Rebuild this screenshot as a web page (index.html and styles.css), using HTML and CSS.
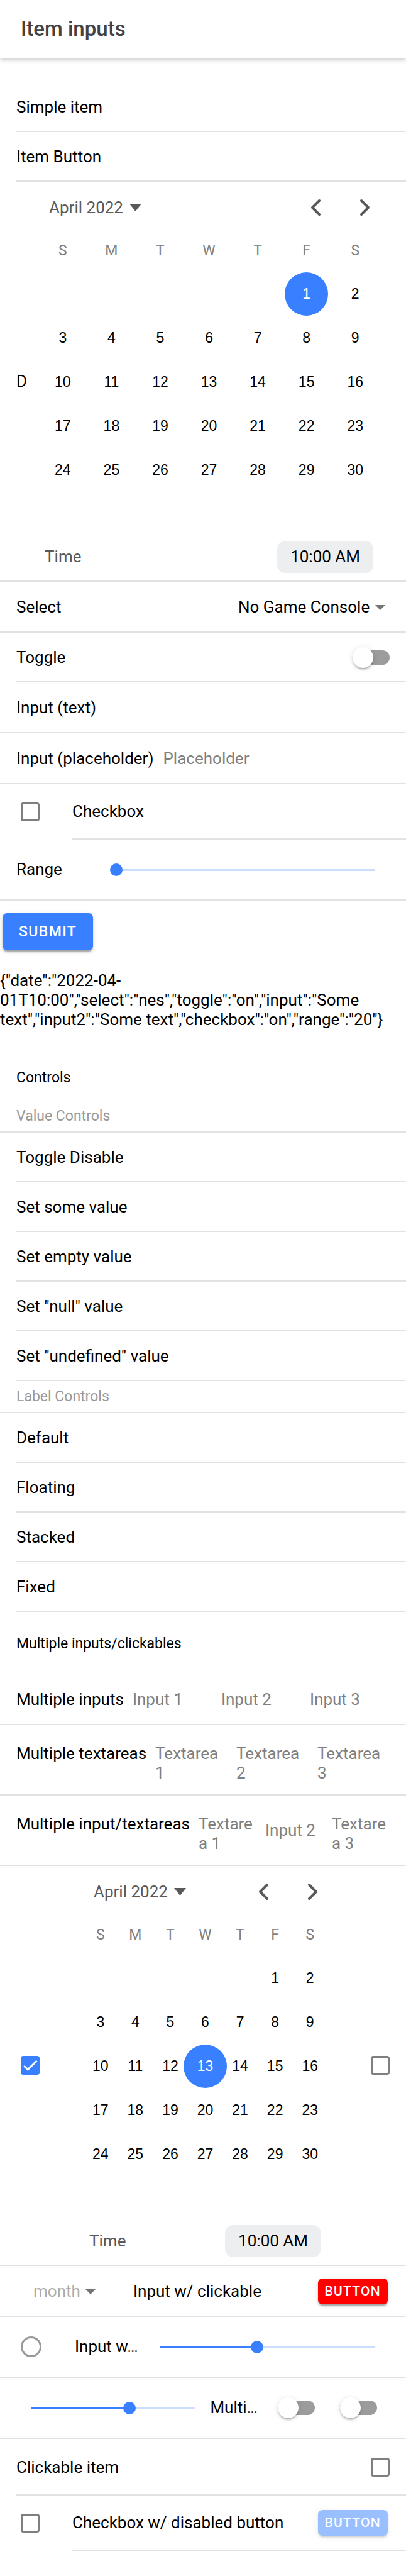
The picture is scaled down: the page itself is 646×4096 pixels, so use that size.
FILE: index.html
```html
<!DOCTYPE html>
<html lang="en">
<head>
<meta charset="utf-8">
<title>Item inputs</title>
<meta name="viewport" content="width=device-width, initial-scale=1">
<link rel="stylesheet" href="styles.css">
</head>
<body>
<header class="toolbar"><h1 class="toolbar-title">Item inputs</h1></header>
<main>
<form class="form" onsubmit="return false">
  <div class="item"><div class="inner">Simple item</div></div>
  <div class="item"><button type="button" class="inner">Item Button</button></div>

  <div class="item full date-item">
    <span class="date-label">D</span>
    <section class="calendar" aria-label="Date">
      <div class="cal-header">
        <button type="button" class="month-btn">April 2022 <svg class="caret" viewBox="0 0 19 12"><path d="M0 0h19L9.500 12z"/></svg></button>
        <button type="button" class="nav-btn" aria-label="Previous month"><svg viewBox="0 0 18 28"><path d="M15 3L4 14l11 11"/></svg></button>
        <button type="button" class="nav-btn" aria-label="Next month"><svg viewBox="0 0 18 28"><path d="M3 3l11 11L3 25"/></svg></button>
      </div>
      <div class="weekdays"><span>S</span><span>M</span><span>T</span><span>W</span><span>T</span><span>F</span><span>S</span></div>
      <div class="days">
        <button type="button" class="day first active">1</button><button type="button" class="day">2</button>
        <button type="button" class="day">3</button><button type="button" class="day">4</button><button type="button" class="day">5</button><button type="button" class="day">6</button><button type="button" class="day">7</button><button type="button" class="day">8</button><button type="button" class="day">9</button>
        <button type="button" class="day">10</button><button type="button" class="day">11</button><button type="button" class="day">12</button><button type="button" class="day">13</button><button type="button" class="day">14</button><button type="button" class="day">15</button><button type="button" class="day">16</button>
        <button type="button" class="day">17</button><button type="button" class="day">18</button><button type="button" class="day">19</button><button type="button" class="day">20</button><button type="button" class="day">21</button><button type="button" class="day">22</button><button type="button" class="day">23</button>
        <button type="button" class="day">24</button><button type="button" class="day">25</button><button type="button" class="day">26</button><button type="button" class="day">27</button><button type="button" class="day">28</button><button type="button" class="day">29</button><button type="button" class="day">30</button>
      </div>
      <div class="time-row"><span>Time</span><button type="button" class="time-btn">10:00 AM</button></div>
    </section>
  </div>

  <div class="item full tall">
    <label class="grow" for="console">Select</label>
    <span class="select-wrap"><select id="console" class="select"><option>No Game Console</option></select><svg class="arrow" viewBox="0 0 16 8"><path d="M0 0h16L8 8z"/></svg></span>
  </div>
  <div class="item"><div class="inner"><label class="grow" for="toggle">Toggle</label><input id="toggle" class="toggle" type="checkbox" role="switch"></div></div>
  <div class="item full tall"><label for="text1">Input (text)</label><input id="text1" class="text" type="text"></div>
  <div class="item full tall"><label for="text2">Input (placeholder)</label><input id="text2" class="text" type="text" placeholder="Placeholder"></div>
  <div class="item check-item"><input id="check1" class="checkbox" type="checkbox"><div class="inner"><label for="check1">Checkbox</label></div></div>
  <div class="item full range-item"><label for="range1">Range</label><input id="range1" class="range range-indent" type="range" value="0" style="--value: 0%"></div>
  <button type="submit" class="button submit">Submit</button>
</form>

<output class="result">{"date":"2022-04-01T10:00","select":"nes","toggle":"on","input":"Some text","input2":"Some text","checkbox":"on","range":"20"}</output>

<section class="controls">
  <h2 class="list-header">Controls</h2>
  <h3 class="divider">Value Controls</h3>
  <div class="item"><button type="button" class="inner">Toggle Disable</button></div>
  <div class="item"><button type="button" class="inner">Set some value</button></div>
  <div class="item"><button type="button" class="inner">Set empty value</button></div>
  <div class="item"><button type="button" class="inner">Set "null" value</button></div>
  <div class="item"><button type="button" class="inner">Set "undefined" value</button></div>
  <h3 class="divider">Label Controls</h3>
  <div class="item"><button type="button" class="inner">Default</button></div>
  <div class="item"><button type="button" class="inner">Floating</button></div>
  <div class="item"><button type="button" class="inner">Stacked</button></div>
  <div class="item"><button type="button" class="inner">Fixed</button></div>
</section>

<section class="multiple">
  <h2 class="list-header">Multiple inputs/clickables</h2>
  <div class="item full multi-item first-multi"><label for="m1">Multiple inputs</label><div class="fields"><input id="m1" class="text" type="text" placeholder="Input 1"><input class="text" type="text" placeholder="Input 2" aria-label="Input 2"><input class="text" type="text" placeholder="Input 3" aria-label="Input 3"></div></div>
  <div class="item full multi-item area-item"><label for="m2">Multiple textareas</label><div class="fields"><textarea id="m2" class="text area" placeholder="Textarea 1"></textarea><textarea class="text area" placeholder="Textarea 2" aria-label="Textarea 2"></textarea><textarea class="text area" placeholder="Textarea 3" aria-label="Textarea 3"></textarea></div></div>
  <div class="item full multi-item area-item"><label for="m3">Multiple input/textareas</label><div class="fields"><textarea id="m3" class="text area" placeholder="Textarea 1"></textarea><input class="text lowered" type="text" placeholder="Input 2" aria-label="Input 2"><textarea class="text area" placeholder="Textarea 3" aria-label="Textarea 3"></textarea></div></div>

  <div class="item full date-item with-checks">
    <input class="checkbox" type="checkbox" checked aria-label="Start">
    <section class="calendar" aria-label="Date with checkboxes">
      <div class="cal-header">
        <button type="button" class="month-btn">April 2022 <svg class="caret" viewBox="0 0 19 12"><path d="M0 0h19L9.500 12z"/></svg></button>
        <button type="button" class="nav-btn" aria-label="Previous month"><svg viewBox="0 0 18 28"><path d="M15 3L4 14l11 11"/></svg></button>
        <button type="button" class="nav-btn" aria-label="Next month"><svg viewBox="0 0 18 28"><path d="M3 3l11 11L3 25"/></svg></button>
      </div>
      <div class="weekdays"><span>S</span><span>M</span><span>T</span><span>W</span><span>T</span><span>F</span><span>S</span></div>
      <div class="days">
        <button type="button" class="day first">1</button><button type="button" class="day">2</button>
        <button type="button" class="day">3</button><button type="button" class="day">4</button><button type="button" class="day">5</button><button type="button" class="day">6</button><button type="button" class="day">7</button><button type="button" class="day">8</button><button type="button" class="day">9</button>
        <button type="button" class="day">10</button><button type="button" class="day">11</button><button type="button" class="day">12</button><button type="button" class="day active">13</button><button type="button" class="day">14</button><button type="button" class="day">15</button><button type="button" class="day">16</button>
        <button type="button" class="day">17</button><button type="button" class="day">18</button><button type="button" class="day">19</button><button type="button" class="day">20</button><button type="button" class="day">21</button><button type="button" class="day">22</button><button type="button" class="day">23</button>
        <button type="button" class="day">24</button><button type="button" class="day">25</button><button type="button" class="day">26</button><button type="button" class="day">27</button><button type="button" class="day">28</button><button type="button" class="day">29</button><button type="button" class="day">30</button>
      </div>
      <div class="time-row"><span>Time</span><button type="button" class="time-btn">10:00 AM</button></div>
    </section>
    <input class="checkbox" type="checkbox" aria-label="End">
  </div>

  <div class="item full tall month-item">
    <span class="select-wrap"><select id="month" class="select muted"><option>month</option></select><svg class="arrow" viewBox="0 0 16 8"><path d="M0 0h16L8 8z"/></svg></span>
    <label class="grow" for="month">Input w/ clickable</label>
    <button type="button" class="button small danger">Button</button>
  </div>
  <div class="item full range-item radio-item"><input id="radio" class="radio" type="radio"><label for="radio">Input w…</label><input class="range" type="range" value="45" aria-label="Amount" style="--value: 45%"></div>
  <div class="item full range-item toggles-item"><input id="range3" class="range" type="range" value="60" style="--value: 60%"><label for="range3">Multi…</label><input class="toggle" type="checkbox" role="switch" aria-label="First toggle"><input class="toggle" type="checkbox" role="switch" aria-label="Second toggle"></div>
  <div class="item check-row"><div class="inner"><label class="grow" for="check4">Clickable item</label><input id="check4" class="checkbox" type="checkbox"></div></div>
  <div class="item check-item"><input id="check5" class="checkbox" type="checkbox"><div class="inner"><label class="grow" for="check5">Checkbox w/ disabled button</label><button type="button" class="button small" disabled>Button</button></div></div>
</section>
</main>
</body>
</html>
```
FILE: styles.css
```css
:root {
  --primary: #3880ff;
  --line: #e2e2e2;
  --pad: 26px;
}

* { box-sizing: border-box; }

body {
  margin: 0;
  background: #fff;
  color: #000;
  font: 26px/31px Roboto, sans-serif;
}

button, input, select, textarea {
  margin: 0;
  padding: 0;
  border: 0;
  background: none;
  color: inherit;
  font: inherit;
}

h1, h2, h3 { margin: 0; font-weight: 400; }

.toolbar {
  display: flex;
  align-items: center;
  height: 92px;
  padding: 0 33px;
  box-shadow: 0 3px 7px rgba(0, 0, 0, .22), 0 1px 1px rgba(0, 0, 0, .04);
}

.toolbar-title {
  color: #424242;
  font-size: 33px;
  font-weight: 500;
  line-height: 40px;
}

.form { padding-top: 39px; }

/* Items */
.item {
  display: flex;
  align-items: stretch;
  min-height: 79px;
  padding-left: var(--pad);
}

.inner {
  display: flex;
  flex: 1;
  align-items: center;
  min-width: 0;
  padding: 2px var(--pad) 0 0;
  border-bottom: 2px solid var(--line);
  text-align: left;
}

.full {
  align-items: center;
  padding-right: var(--pad);
  border-bottom: 2px solid var(--line);
}

.tall { min-height: 81px; padding-top: 2px; }
.grow { flex: 1; }

.text {
  flex: 1;
  min-width: 0;
  width: 0;
  margin-left: 15px;
  outline: 0;
}

.text::placeholder { color: #808080; opacity: 1; }

/* Date picker */
.date-item { gap: 2px; }
.date-label { flex: none; }
.calendar { flex: 1; min-width: 0; padding-bottom: 12px; color: #595959; }

.cal-header {
  display: flex;
  align-items: center;
  height: 82px;
  padding-left: 33px;
}

.month-btn {
  display: flex;
  gap: 10px;
  align-items: center;
  margin-right: auto;
}

.caret { width: 19px; height: 12px; fill: #595959; }

.nav-btn {
  display: grid;
  place-items: center;
  width: 79px;
  height: 79px;
}

.nav-btn svg {
  width: 18px;
  height: 28px;
  fill: none;
  stroke: #595959;
  stroke-width: 4;
  stroke-linecap: round;
  stroke-linejoin: round;
}

.weekdays, .days {
  display: grid;
  grid-template-columns: repeat(7, minmax(0, 1fr));
  padding: 0 16px;
}

.weekdays {
  height: 61px;
  padding-top: 12px;
  color: #808080;
  font-size: 23px;
  text-align: center;
}

.days {
  grid-template-rows: repeat(6, 70px);
  color: #000;
  font: 23px/28px "Liberation Sans", Arial, sans-serif;
  place-items: center;
}

.day { width: 69px; height: 69px; border-radius: 50%; }
.first { grid-column: 6; }
.active { background: var(--primary); color: #fff; }

.time-row {
  display: flex;
  align-items: center;
  justify-content: space-between;
  padding: 8px 26px 0;
}

.time-btn {
  padding: 10px 21px;
  border-radius: 13px;
  background: #edeef0;
  color: #000;
}

.with-checks { padding-left: 33px; }
.with-checks .calendar { margin: 0 51px; }

/* Controls */
.select-wrap { display: flex; gap: 8px; align-items: center; padding-right: 7px; }
.select { appearance: none; }
.arrow { width: 16px; height: 8px; fill: #757575; }
.muted { color: #acacac; }

.checkbox, .radio {
  appearance: none;
  flex: none;
  align-self: center;
  width: 30px;
  height: 30px;
  border: 3px solid #7f7f7f;
  border-radius: 4px;
}

.checkbox:checked {
  border-color: var(--primary);
  background: var(--primary);
}

.checkbox:checked::before {
  content: "";
  display: block;
  width: 24px;
  height: 24px;
  background: #fff;
  clip-path: polygon(5% 58%, 13% 50%, 34% 70%, 90% 16%, 98% 24%, 34% 88%);
}

.radio {
  width: 33px;
  height: 33px;
  border-color: #999;
  border-radius: 50%;
}

.toggle {
  appearance: none;
  position: relative;
  flex: none;
  width: 59px;
  height: 23px;
  border-radius: 12px;
  background: #9c9c9c;
}

.toggle::before {
  content: "";
  position: absolute;
  top: -5px;
  left: 0;
  width: 33px;
  height: 33px;
  border-radius: 50%;
  background: #fff;
  box-shadow: 0 4px 3px -3px rgba(0, 0, 0, .2), 0 3px 3px rgba(0, 0, 0, .14), 0 1px 8px rgba(0, 0, 0, .12);
}

.toggle:checked::before { left: 26px; }

.range {
  appearance: none;
  flex: 1;
  min-width: 0;
  height: 20px;
  background: linear-gradient(90deg, var(--primary) var(--value), #cbdeff var(--value)) center / calc(100% - 20px) 4px no-repeat;
}

.range::-webkit-slider-thumb {
  appearance: none;
  width: 20px;
  height: 20px;
  border-radius: 50%;
  background: var(--primary);
}

.range-item { min-height: 97px; padding-right: 39px; }
.range-indent { margin-left: 76px; }

.check-item { min-height: 88px; padding-left: 33px; }
.check-item .inner { margin-left: 52px; padding-top: 0; }
.check-row { min-height: 90px; }

.button {
  height: 59px;
  padding: 0 26px;
  border-radius: 7px;
  background: var(--primary);
  box-shadow: 0 5px 2px -3px rgba(0, 0, 0, .2), 0 3px 3px rgba(0, 0, 0, .14), 0 2px 8px rgba(0, 0, 0, .12);
  color: #fff;
  font-size: 23px;
  font-weight: 500;
  letter-spacing: .06em;
  text-transform: uppercase;
}

.submit { display: block; margin: 20px 4px 33px; }

.small {
  height: 41px;
  margin-right: 3px;
  padding: 0 11px;
  font-size: 21px;
}

.danger { background: #f00; }
.button:disabled { opacity: .5; }

.result { display: block; }

/* Section headers */
.list-header {
  padding: 21px var(--pad);
  font-size: 23px;
}

.controls { padding-top: 40px; }

.divider {
  padding: 9px var(--pad);
  border-bottom: 2px solid var(--line);
  color: #999;
  font-size: 23px;
}

.multiple { padding: 14px 0 40px; }
.first-multi { margin-top: 14px; }

/* Items with several fields */
.multi-item { padding-right: 12px; }
.fields { display: flex; flex: 1; min-width: 0; padding-left: 14px; }
.fields .text { margin: 0; padding-right: 13px; }
.area-item { align-items: flex-start; min-height: 112px; padding-top: 30px; }
.fields .area { height: 62px; overflow: hidden; resize: none; }
.fields .lowered { align-self: flex-start; margin-top: 10px; }

.month-item { padding-left: 53px; }
.month-item .grow { margin-left: 53px; }
.radio-item { padding-left: 33px; }
.radio-item label { margin: 0 25px 0 53px; }
.toggles-item { padding-right: 46px; padding-left: 39px; }
.toggles-item label { margin: 0 32px 0 14px; }
.toggles-item .toggle + .toggle { margin-left: 40px; }
```
